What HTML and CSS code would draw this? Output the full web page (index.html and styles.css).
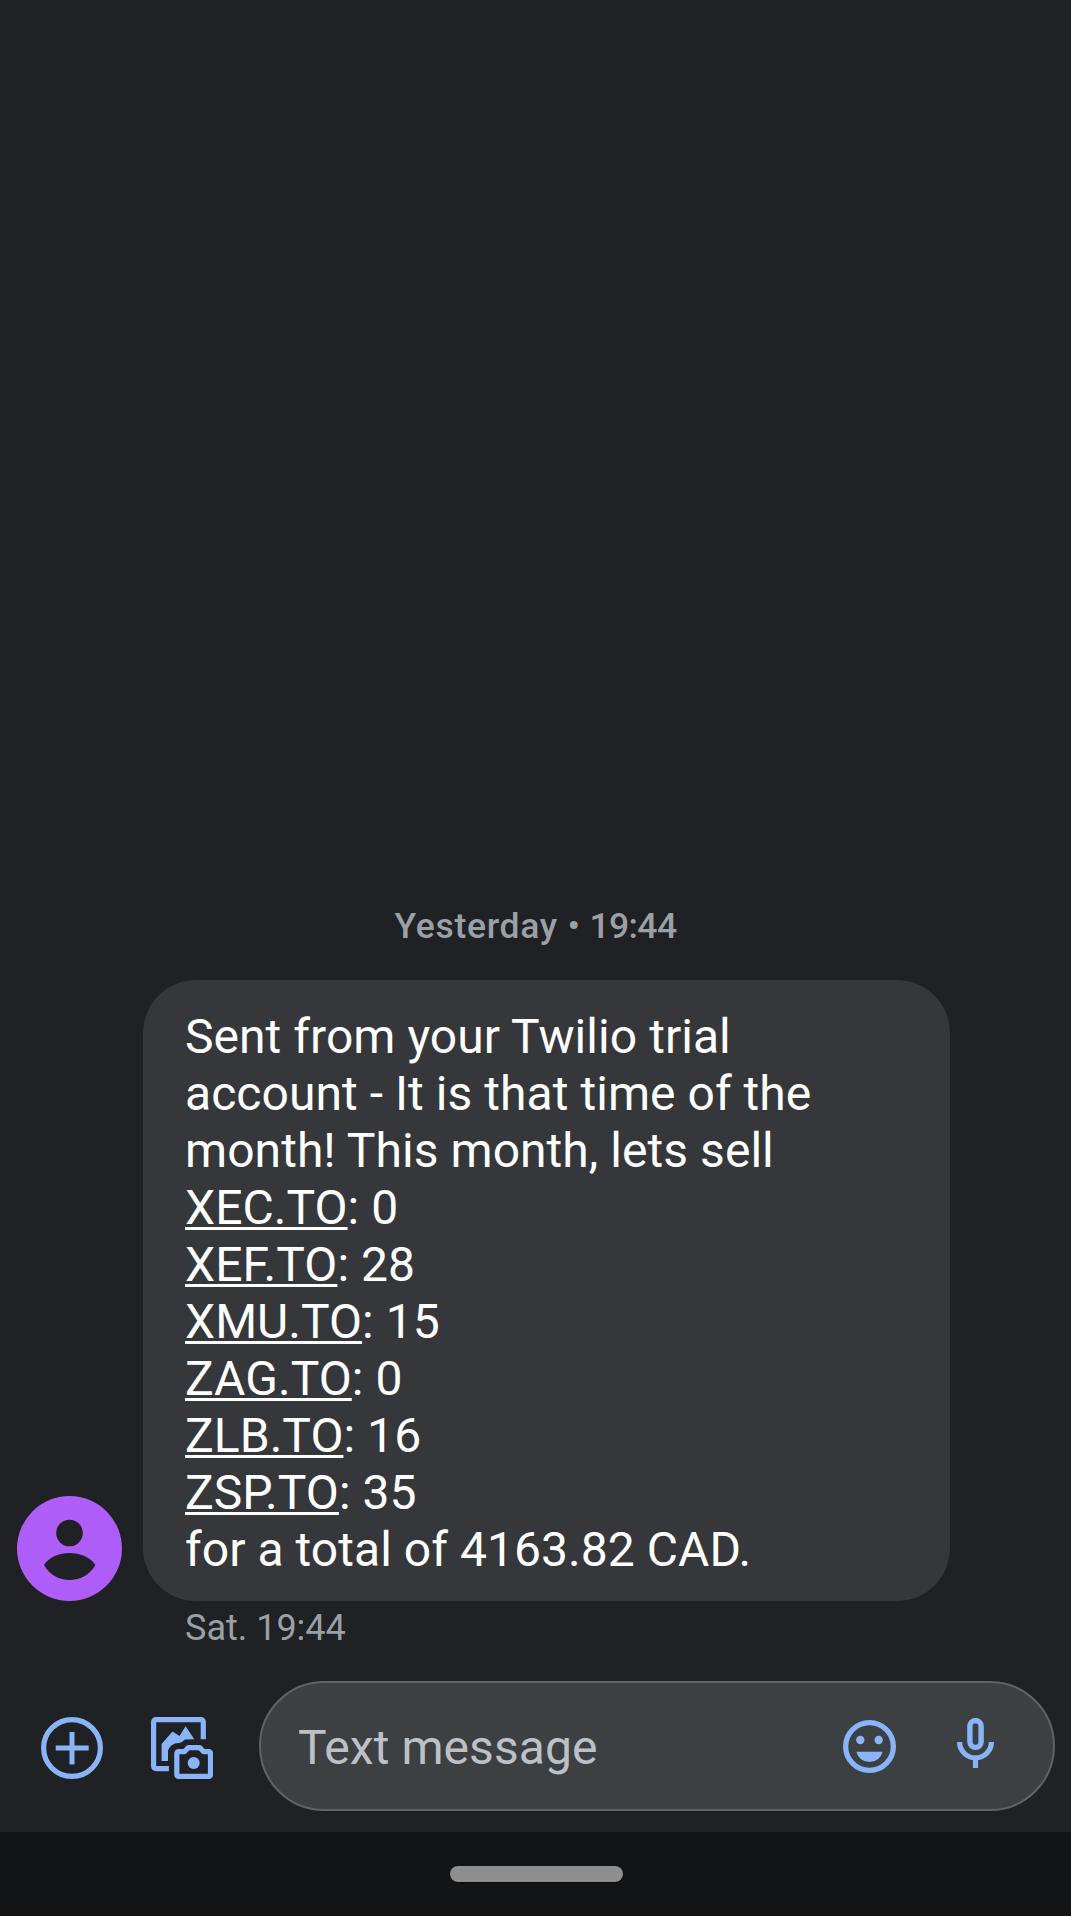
FILE: index.html
```html
<!DOCTYPE html>
<html lang="en">
<head>
<meta charset="utf-8">
<title>Messages</title>
<link rel="stylesheet" href="styles.css">
</head>
<body>
<div class="screen">
  <main class="thread">
    <div class="date"><span class="day">Yesterday •</span> <span class="time">19:44</span></div>
    <div class="message">
      <svg class="avatar" viewBox="0 0 105 105" aria-hidden="true">
        <circle cx="52.5" cy="52.5" r="52.5" fill="#ae5df8"/>
        <circle cx="52.5" cy="37" r="13.3" fill="#202124"/>
        <path d="M27 69C37 53 68 53 78.500 69C67 89 38 89 27 69Z" fill="#202124"/>
      </svg>
      <div class="bubble">Sent from your Twilio trial<br>account - It is that time of the<br>month! This month, lets sell<br><a class="link">XEC.TO</a>: 0<br><a class="link">XEF.TO</a>: 28<br><a class="link">XMU.TO</a>: 15<br><a class="link">ZAG.TO</a>: 0<br><a class="link">ZLB.TO</a>: 16<br><a class="link">ZSP.TO</a>: 35<br>for a total of 4163.82 CAD.</div>
    </div>
    <div class="sent-time">Sat. 19:44</div>
  </main>
  <footer class="composer">
    <svg class="icon-add" viewBox="0 0 62 62" aria-hidden="true">
      <circle cx="31" cy="31" r="28.400" fill="none" stroke="#8ab4f8" stroke-width="5.200"/>
      <path d="M31 15v32.500M14.700 31h33" fill="none" stroke="#8ab4f8" stroke-width="5"/>
    </svg>
    <svg class="icon-gallery" viewBox="0 0 62 62" aria-hidden="true">
      <path d="M52.300 22.300V5a2.400 2.400 0 0 0-2.400-2.400H5A2.400 2.400 0 0 0 2.600 5v44.300A2.400 2.400 0 0 0 5 51.700h12.900" fill="none" stroke="#8ab4f8" stroke-width="5.200"/>
      <path d="M10.600 44V27L21.500 14.500L28.500 19L34.600 9.300L43.300 22.300L34 22.600C29.500 26.500 28 26.300 24 26.500C19.500 28 17 32 17 35V44Z" fill="#8ab4f8"/>
      <path d="M27.500 34.700h5.800l4-4.100h11.400l4 4.100h5.100a1.700 1.700 0 0 1 1.700 1.700v21.300a1.700 1.700 0 0 1-1.700 1.700H27.500a1.700 1.700 0 0 1-1.700-1.700V36.400a1.700 1.700 0 0 1 1.700-1.700Z" fill="none" stroke="#8ab4f8" stroke-width="5.200" stroke-linejoin="round"/>
      <circle cx="42.700" cy="46" r="6" fill="#8ab4f8"/>
    </svg>
    <div class="field">
      <span class="placeholder">Text message</span>
      <svg class="icon-emoji" viewBox="0 0 53 53" aria-hidden="true">
        <circle cx="26.500" cy="26.500" r="23.850" fill="none" stroke="#8ab4f8" stroke-width="5.300"/>
        <circle cx="17.300" cy="20" r="4.200" fill="#8ab4f8"/>
        <circle cx="35.700" cy="20" r="4.200" fill="#8ab4f8"/>
        <path d="M13.300 31.700h26.400a13.600 13.600 0 0 1-26.400 0Z" fill="#8ab4f8"/>
      </svg>
      <svg class="icon-mic" viewBox="0 0 37 50" aria-hidden="true">
        <rect x="12.900" y="2.600" width="11.200" height="26.800" rx="5.600" fill="none" stroke="#8ab4f8" stroke-width="5.400"/>
        <path d="M2.600 24a15.900 15.900 0 0 0 31.800 0M18.500 39v11" fill="none" stroke="#8ab4f8" stroke-width="5.200"/>
      </svg>
    </div>
  </footer>
  <div class="navbar"><div class="handle"></div></div>
</div>
</body>
</html>
```
FILE: styles.css
```css
* { box-sizing: border-box; }

body {
  margin: 0;
  background: #202124;
  font-family: Roboto, "Liberation Sans", sans-serif;
  color: #fff;
}

.screen {
  width: 1071px;
  height: 1916px;
  display: flex;
  flex-direction: column;
  overflow: hidden;
}

.thread {
  height: 1681px;
  padding-bottom: 30px;
  display: flex;
  flex-direction: column;
  justify-content: flex-end;
}

.date {
  height: 54px;
  margin-bottom: 27px;
  text-align: center;
  font-size: 35.5px;
  font-weight: 500;
  line-height: 54px;
  color: #9aa0a6;
  white-space: nowrap;
}

.day { letter-spacing: 0.7px; }
.time { letter-spacing: -0.6px; }

.message {
  display: flex;
  align-items: flex-end;
  gap: 21px;
  padding-left: 17px;
}

.avatar { width: 105px; height: 105px; }

.bubble {
  width: 807px;
  height: 621px;
  padding: 28px 42px 23px;
  border-radius: 53px;
  background: #36373a;
  font-size: 48px;
  line-height: 57px;
  letter-spacing: 0.05px;
  white-space: nowrap;
}

.link {
  text-decoration: underline;
  text-decoration-thickness: 3px;
  text-underline-offset: 3px;
  text-decoration-skip-ink: none;
}

.sent-time {
  height: 50px;
  padding-left: 185px;
  font-size: 36px;
  line-height: 54px;
  color: #9aa0a6;
}

.composer {
  height: 151px;
  padding: 0 16px 21px 41px;
  display: flex;
  align-items: center;
}

.icon-add { width: 62px; height: 62px; margin: 4px 48px 0 0; }
.icon-gallery { width: 62px; height: 62px; margin: 4px 46px 0 0; }

.field {
  flex: 1;
  height: 130px;
  padding: 0 59px 0 37px;
  display: flex;
  align-items: center;
  border: 2px solid #5f6368;
  border-radius: 65px;
  background: #3c4043;
}

.placeholder {
  flex: 1;
  padding-top: 2px;
  font-size: 48px;
  line-height: 57px;
  letter-spacing: 0.05px;
  color: #bdc1c6;
}

.icon-emoji { width: 53px; height: 53px; margin-right: 61px; }
.icon-mic { width: 37px; height: 50px; margin-top: -6px; }

.navbar {
  height: 84px;
  padding: 34px 0 0 1px;
  background: #131416;
}

.handle {
  width: 173px;
  height: 16px;
  margin: 0 auto;
  border-radius: 8px;
  background: #8e8e8e;
  box-shadow: 0 1px 1px #0b0b0c;
}
```
